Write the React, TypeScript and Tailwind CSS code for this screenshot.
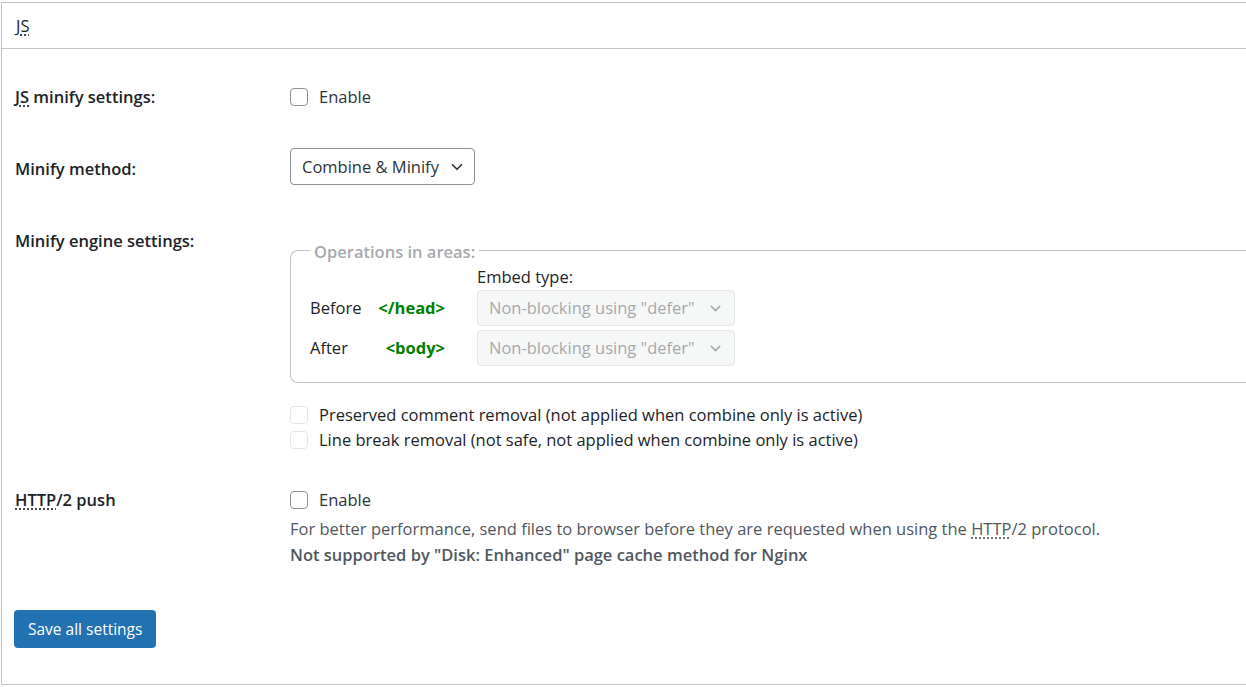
import { ChevronDown } from 'lucide-react';

function Abbr({ children }: { children: React.ReactNode }) {
  return <abbr className="no-underline [text-decoration:underline_dotted] underline-offset-[3px]">{children}</abbr>;
}

function Checkbox({ disabled = false }: { disabled?: boolean }) {
  return (
    <span
      className={
        disabled
          ? 'inline-block h-[18px] w-[18px] shrink-0 rounded-[4px] border border-[#e5e5e7] bg-white'
          : 'inline-block h-[18px] w-[18px] shrink-0 rounded-[4px] border border-[#8c8f94] bg-white'
      }
    />
  );
}

function DisabledSelect() {
  return (
    <div className="flex h-[36px] w-[258px] items-center justify-between rounded-[4px] border border-[#e6e7e8] bg-[#f6f7f7] pl-[11px] pr-[10px] text-[#a7aaad]">
      <span>Non-blocking using "defer"</span>
      <ChevronDown className="h-[17px] w-[17px]" strokeWidth={2} />
    </div>
  );
}

export default function App() {
  return (
    <div className="min-h-[687px] bg-white pl-[1px] pt-[2px] text-[16.5px] leading-[24px] text-[#1d2327] [font-family:'Open_Sans',sans-serif]">
      <div className="h-[683px] border-b border-l border-t border-[#c3c4c7]">
        <div className="flex h-[46px] items-center border-b border-[#c3c4c7] pl-[14px]">
          <Abbr>JS</Abbr>
        </div>

        <div className="flex items-center pl-[13px] pt-[36px]">
          <div className="w-[275px] font-semibold">
            <Abbr>JS</Abbr> minify settings:
          </div>
          <label className="flex items-center gap-[11px]">
            <Checkbox />
            <span className="text-[#2c3338]">Enable</span>
          </label>
        </div>

        <div className="flex items-center pl-[13px] pt-[39px]">
          <div className="w-[275px] pt-[4px] font-semibold">Minify method:</div>
          <div className="flex h-[37px] w-[185px] items-center justify-between rounded-[4px] border border-[#8c8f94] pl-[11px] pr-[8px] text-[#2c3338]">
            <span>Combine &amp; Minify</span>
            <ChevronDown className="h-[18px] w-[18px]" strokeWidth={2.2} />
          </div>
        </div>

        <div className="flex pl-[13px] pt-[44px]">
          <div className="w-[275px] font-semibold">Minify engine settings:</div>
          <div className="flex-1 pt-[9px]">
            <fieldset className="rounded-l-[8px] border border-r-0 border-[#c3c4c7] pb-[16px] pl-[19px]">
              <legend className="translate-y-[2px] px-[4px] font-semibold text-[#a7aaad]">Operations in areas:</legend>
              <div className="mt-[3px] pl-[167px]">Embed type:</div>
              <div className="mt-[1px] flex items-center">
                <div className="w-[60px]">Before</div>
                <div className="w-[75px] text-right font-bold text-[#008000]">&lt;/head&gt;</div>
                <div className="pl-[32px]">
                  <DisabledSelect />
                </div>
              </div>
              <div className="mt-[4px] flex items-center">
                <div className="w-[60px]">After</div>
                <div className="w-[75px] text-right font-bold text-[#008000]">&lt;body&gt;</div>
                <div className="pl-[32px]">
                  <DisabledSelect />
                </div>
              </div>
            </fieldset>
            <div className="pt-[19px]">
              <label className="flex h-[25px] items-center gap-[11px]">
                <Checkbox disabled />
                <span>Preserved comment removal (not applied when combine only is active)</span>
              </label>
              <label className="flex h-[25px] items-center gap-[11px]">
                <Checkbox disabled />
                <span>Line break removal (not safe, not applied when combine only is active)</span>
              </label>
            </div>
          </div>
        </div>

        <div className="flex pl-[13px] pt-[36px]">
          <div className="w-[275px] font-semibold">
            <Abbr>HTTP</Abbr>/2 push
          </div>
          <div>
            <label className="flex items-center gap-[11px]">
              <Checkbox />
              <span className="text-[#2c3338]">Enable</span>
            </label>
            <p className="mt-[5px] text-[#50575e]">
              For better performance, send files to browser before they are requested when using the <Abbr>HTTP</Abbr>/2 protocol.
            </p>
            <p className="mt-[2px] font-semibold text-[#50575e]">Not supported by "Disk: Enhanced" page cache method for Nginx</p>
          </div>
        </div>

        <div className="pl-[12px] pt-[43px]">
          <button
            type="button"
            className="h-[38px] rounded-[4px] bg-[#2271b1] px-[14px] text-[15.5px] text-white"
          >
            Save all settings
          </button>
        </div>
      </div>
    </div>
  );
}
